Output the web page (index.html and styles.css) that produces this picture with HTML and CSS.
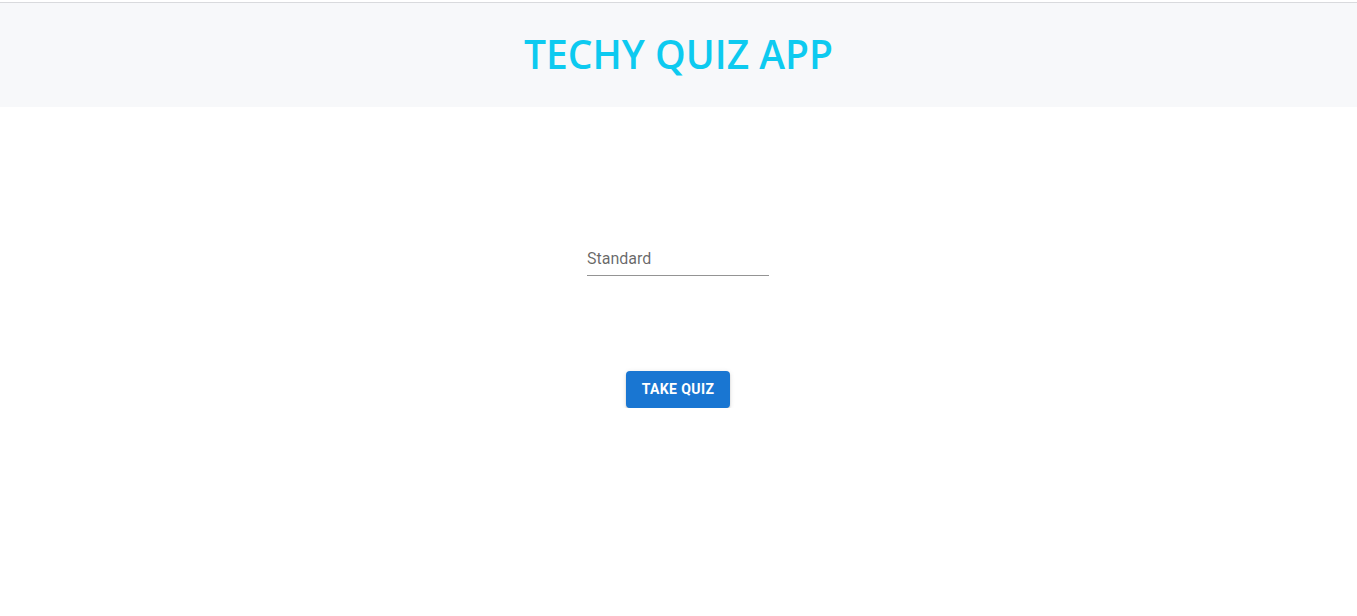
FILE: index.html
```html
<!DOCTYPE html>
<html lang="en">
<head>
<meta charset="utf-8">
<title>Techy Quiz App</title>
<link rel="stylesheet" href="styles.css">
</head>
<body>
<div class="topline"></div>
<header class="header">
  <h1 class="title">TECHY QUIZ APP</h1>
</header>
<main class="main">
  <div class="field">
    <input class="input" type="text" placeholder="Standard">
  </div>
  <button class="btn" type="button">Take Quiz</button>
</main>
</body>
</html>
```
FILE: styles.css
```css
* { box-sizing: border-box; }
html, body { margin: 0; padding: 0; background: #fff; }
body { font-family: Roboto, "Liberation Sans", sans-serif; }
.topline {
  height: 3px;
  border-bottom: 1px solid #d9dadd;
  background: #fff;
}
.header {
  height: 104px;
  background: #f7f8fa;
  display: flex;
  align-items: center;
  justify-content: center;
  padding-bottom: 4px;
}
.title {
  margin: 0;
  font-family: "Open Sans", "Noto Sans", sans-serif;
  font-weight: 600;
  font-size: 39px;
  color: #0dcaf0;
  letter-spacing: 0;
}
.main {
  display: flex;
  flex-direction: column;
  align-items: center;
  padding-top: 136px;
}
.field { width: 182px; margin-right: 1px; }
.input {
  width: 182px;
  border: none;
  border-bottom: 1px solid rgba(0,0,0,0.42);
  outline: none;
  padding: 4px 0 5px;
  font-family: Roboto, sans-serif;
  font-size: 16px;
  line-height: 23px;
  height: 33px;
  color: rgba(0,0,0,0.87);
  background: transparent;
}
.input::placeholder { color: rgba(0,0,0,0.6); opacity: 1; }
.btn {
  margin-top: 95px;
  margin-right: 1px;
  background: #1976d2;
  color: #fff;
  border: none;
  border-radius: 4px;
  padding: 5px 16px 7px;
  height: 37px;
  font-family: Roboto, sans-serif;
  font-weight: 700;
  font-size: 14px;
  letter-spacing: 0.4px;
  text-transform: uppercase;
  box-shadow: 0 3px 1px -2px rgba(0,0,0,0.2), 0 2px 2px 0 rgba(0,0,0,0.14), 0 1px 5px 0 rgba(0,0,0,0.12);
  cursor: pointer;
}
```
